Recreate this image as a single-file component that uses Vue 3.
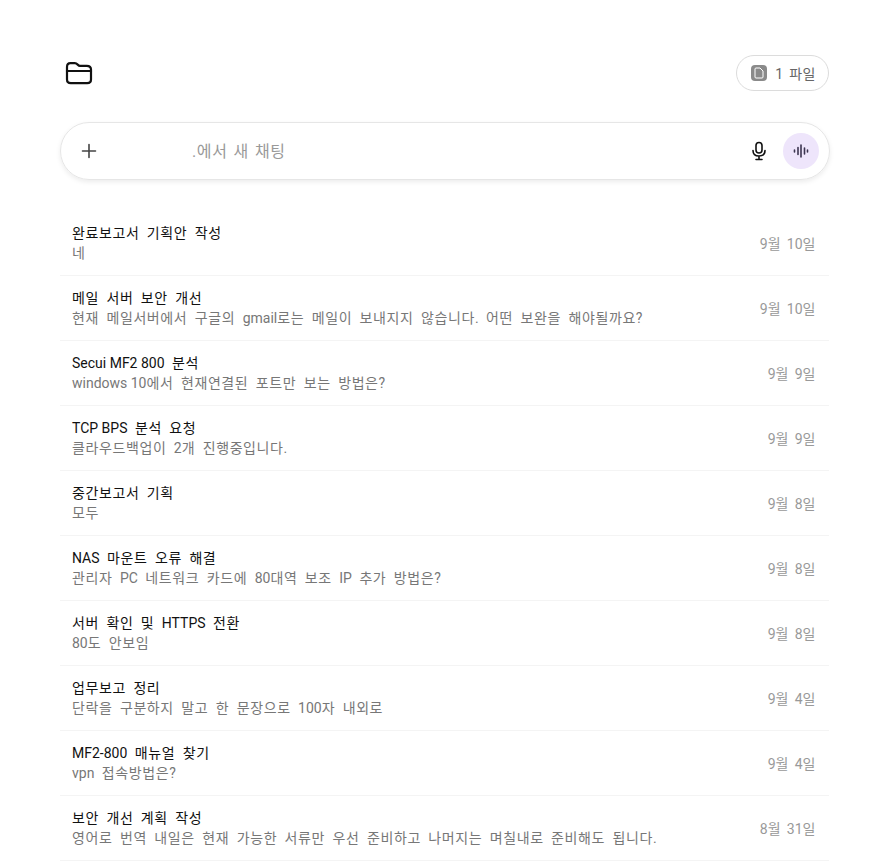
<template>
  <div class="page">
    <div class="top">
      <svg class="folder" width="28" height="24" viewBox="0 0 28 24" fill="none" stroke="#111" stroke-width="2.2" stroke-linecap="round" stroke-linejoin="round">
        <path d="M2 6C2 3.600 3.200 2.200 5.400 2.200h4.400c2.800 0 2.900 2.600 5.200 2.600h6.800c2.800 0 4.200 1.400 4.200 3.800v10c0 2.400-1.400 3.600-3.800 3.600H5.800C3.400 22.200 2 21 2 18.600z" />
        <path d="M2 10h24" />
      </svg>
      <div class="file-chip">
        <span class="file-icon">
          <svg width="10" height="12" viewBox="0 0 10 12" fill="none" stroke="#fff" stroke-width="1" stroke-linejoin="round">
            <path d="M1 2a1 1 0 0 1 1-1h4l3 3v6a1 1 0 0 1-1 1H2a1 1 0 0 1-1-1z" />
          </svg>
        </span>
        <span>1 파일</span>
      </div>
    </div>

    <div class="prompt">
      <svg class="plus" width="16" height="16" viewBox="0 0 16 16" stroke="#444" stroke-width="1.6" stroke-linecap="round">
        <path d="M8 1.500v13M1.500 8h13" />
      </svg>
      <span class="placeholder">.에서 새 채팅</span>
      <svg class="mic" width="16" height="20" viewBox="0 0 16 20" fill="none" stroke="#111" stroke-width="1.6" stroke-linecap="round">
        <rect x="5" y="1.500" width="6" height="10.500" rx="3" />
        <path d="M2 9.500c0 3.500 2.500 5.500 6 5.500s6-2 6-5.500M8 15v3M5 18.500h6" />
      </svg>
      <span class="voice">
        <svg width="16" height="14" viewBox="0 0 16 14" stroke="#3c3550" stroke-width="1.6" stroke-linecap="round">
          <path d="M1.500 6v2M5 3.500v7M8 1v12M11.500 4v6M14.500 6v2" />
        </svg>
      </span>
    </div>

    <ul class="chats">
      <li v-for="chat in chats" :key="chat.title" class="chat">
        <div class="chat-text">
          <div class="chat-title">
            <span v-for="(run, i) in runs(chat.title)" :key="i" :class="{ latin: run.latin }">{{ run.text }}</span>
          </div>
          <div class="chat-last">
            <span v-for="(run, i) in runs(chat.last)" :key="i" :class="{ latin: run.latin }">{{ run.text }}</span>
          </div>
        </div>
        <div class="chat-date">
          <span v-for="(run, i) in runs(chat.date)" :key="i" :class="{ latin: run.latin }">{{ run.text }}</span>
        </div>
      </li>
    </ul>
  </div>
</template>

<script setup>
const chats = [
  { title: '완료보고서 기획안 작성', last: '네', date: '9월 10일' },
  { title: '메일 서버 보안 개선', last: '현재 메일서버에서 구글의 gmail로는 메일이 보내지지 않습니다. 어떤 보완을 해야될까요?', date: '9월 10일' },
  { title: 'Secui MF2 800 분석', last: 'windows 10에서 현재연결된 포트만 보는 방법은?', date: '9월 9일' },
  { title: 'TCP BPS 분석 요청', last: '클라우드백업이 2개 진행중입니다.', date: '9월 9일' },
  { title: '중간보고서 기획', last: '모두', date: '9월 8일' },
  { title: 'NAS 마운트 오류 해결', last: '관리자 PC 네트워크 카드에 80대역 보조 IP 추가 방법은?', date: '9월 8일' },
  { title: '서버 확인 및 HTTPS 전환', last: '80도 안보임', date: '9월 8일' },
  { title: '업무보고 정리', last: '단락을 구분하지 말고 한 문장으로 100자 내외로', date: '9월 4일' },
  { title: 'MF2-800 매뉴얼 찾기', last: 'vpn 접속방법은?', date: '9월 4일' },
  { title: '보안 개선 계획 작성', last: '영어로 번역 내일은 현재 가능한 서류만 우선 준비하고 나머지는 며칠내로 준비해도 됩니다.', date: '8월 31일' }
]

// latin runs need tighter spacing than hangul
const runs = (text) =>
  text
    .split(/([A-Za-z0-9.?-]+(?: [A-Za-z0-9.?-]+)*)/)
    .filter(Boolean)
    .map((part) => ({ text: part, latin: /^[A-Za-z0-9.?-]/.test(part) }))
</script>

<style>
html, body {
  background: #fff;
  overflow: hidden;
}
</style>

<style scoped>
.page {
  height: 861px;
  box-sizing: border-box;
  overflow: hidden;
  padding: 55px 42px 0 60px;
  font-family: Roboto, "Noto Sans CJK KR", sans-serif;
  font-size: 14px;
  letter-spacing: 0.55px;
  word-spacing: 1.5px;
  color: #111;
}

.top {
  display: flex;
  align-items: center;
  justify-content: space-between;
  height: 36px;
}

.folder {
  margin-left: 5px;
}

.file-chip {
  display: flex;
  align-items: center;
  gap: 8px;
  height: 36px;
  box-sizing: border-box;
  padding: 0 12px 0 14px;
  border: 1px solid #dcdcdc;
  border-radius: 18px;
  color: #666;
}

.file-icon {
  display: flex;
  align-items: center;
  justify-content: center;
  width: 16px;
  height: 16px;
  border-radius: 4px;
  background: #8a8a8a;
}

.prompt {
  display: flex;
  align-items: center;
  height: 58px;
  box-sizing: border-box;
  margin-top: 31px;
  margin-right: -1px;
  padding: 0 10px 0 20px;
  border: 1px solid #e6e6e6;
  border-radius: 29px;
  box-shadow: 0 2px 5px rgba(0, 0, 0, 0.08);
}

.placeholder {
  flex: 1;
  margin-left: 95px;
  margin-top: -2px;
  font-size: 16px;
  letter-spacing: 0.6px;
  color: #999;
}

.mic {
  margin-right: 16px;
}

.voice {
  display: flex;
  align-items: center;
  justify-content: center;
  width: 36px;
  height: 36px;
  border-radius: 50%;
  background: #eee5fb;
}

.chats {
  list-style: none;
  margin: 31px 0 0;
  padding: 0;
}

.chat {
  display: flex;
  align-items: center;
  justify-content: space-between;
  height: 65px;
  box-sizing: border-box;
  padding: 0 13px 1px 12px;
  border-bottom: 1px solid #f4f4f4;
  letter-spacing: 0.6px;
  word-spacing: 3.4px;
}

.latin {
  letter-spacing: 0;
  word-spacing: 0;
}

.chat-title,
.chat-last {
  line-height: 20px;
}

.chat-title {
  color: #111;
}

.chat-last {
  color: #777;
}

.chat-date {
  color: #999;
  word-spacing: 1.5px;
}
</style>
